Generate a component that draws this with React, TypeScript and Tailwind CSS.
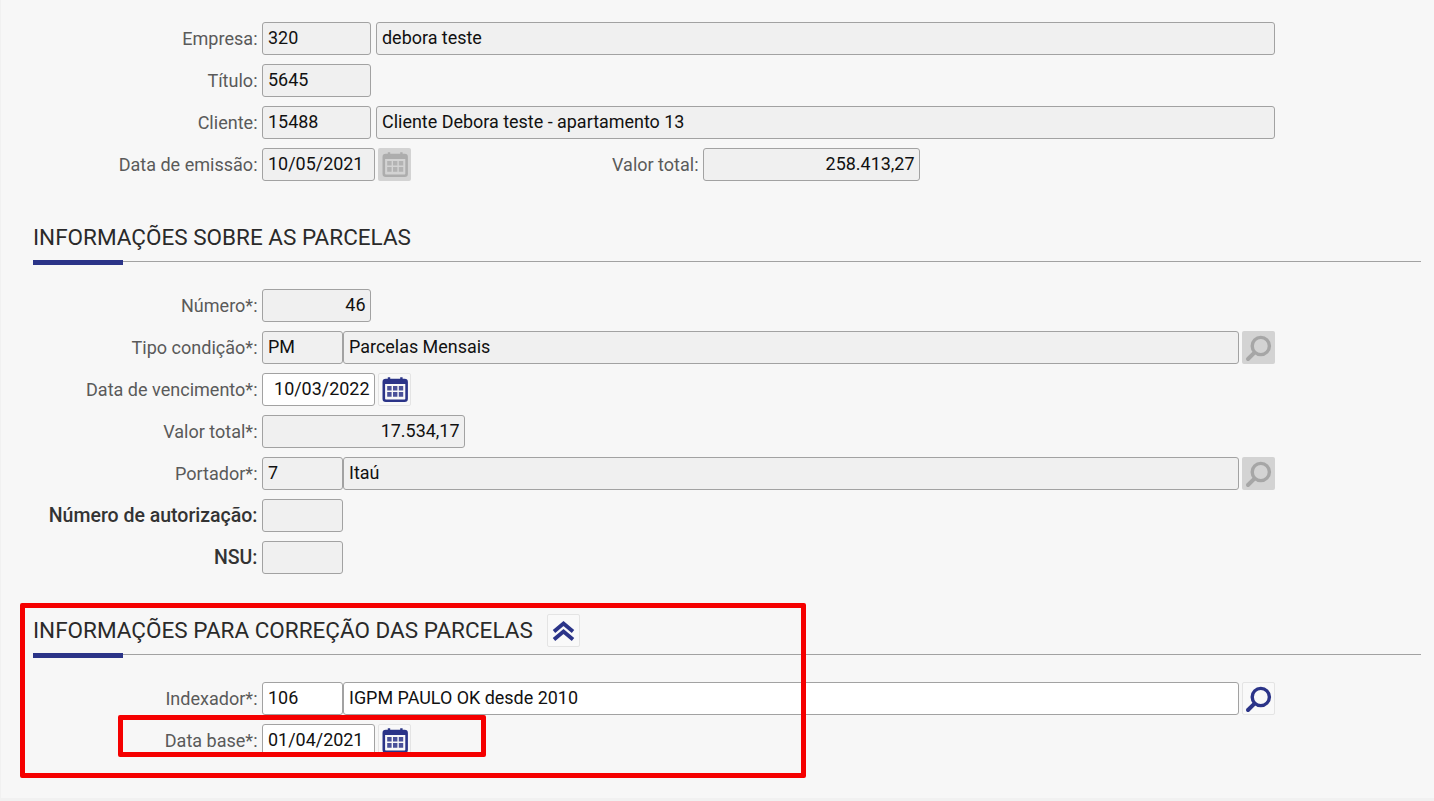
import type { ReactNode } from "react";

const navy = "#2b3488";

function CalendarIcon({ color }: { color: string }) {
  return (
    <svg width="33" height="33" viewBox="0 0 33 33" fill="none" className="shrink-0">
      <rect x="5.8" y="7" width="22.8" height="20.8" rx="2" stroke={color} strokeWidth="2.6" />
      <rect x="5.8" y="7" width="22.8" height="4" fill={color} />
      <path d="M11 4.2v4M23.4 4.2v4" stroke={color} strokeWidth="2.4" />
      <path
        d="M9.2 13h4.4v4.6H9.2zM15 13h4.4v4.6H15zM20.8 13h4.4v4.6h-4.4zM9.2 19h4.4v4.8H9.2zM15 19h4.4v4.8H15zM20.8 19h4.4v4.8h-4.4z"
        fill={color}
        opacity="0.85"
      />
    </svg>
  );
}

function SearchIcon({ color }: { color: string }) {
  return (
    <svg width="33" height="33" viewBox="0 0 33 33" fill="none" className="shrink-0">
      <circle cx="18.8" cy="15" r="8.6" stroke={color} strokeWidth="3.4" />
      <path d="M12.2 21.8L6 28" stroke={color} strokeWidth="4" strokeLinecap="round" />
    </svg>
  );
}

function IconButton({ children, disabled }: { children: ReactNode; disabled?: boolean }) {
  return (
    <span
      className={`flex h-[33px] w-[33px] shrink-0 items-center justify-center rounded-[2px] ${
        disabled ? "bg-[#d3d3d3]" : "border border-[#e4e4e4] bg-[#f9f9f9]"
      }`}
    >
      {children}
    </span>
  );
}

function Field({
  value,
  width,
  active,
  right,
}: {
  value?: string;
  width: string;
  active?: boolean;
  right?: boolean;
}) {
  return (
    <span
      className={`flex h-[33px] shrink-0 items-center rounded-[3px] border border-[#a2a2a2] px-[5px] pb-[1px] text-[17.95px] text-[#111] ${width} ${
        active ? "bg-white" : "bg-[#f0f0f0]"
      } ${right ? "justify-end pr-[4.5px]" : ""}`}
    >
      {value}
    </span>
  );
}

function Row({ label, bold, children }: { label: string; bold?: boolean; children?: ReactNode }) {
  return (
    <div className="flex h-[33px] items-center">
      <span
        className={`w-[257.5px] text-right ${
          bold ? "text-[19.5px] font-medium text-[#333]" : "text-[18.05px] text-[#5a5a5a]"
        }`}
      >
        {label}:
      </span>
      <div className="ml-[4.5px] flex items-center">{children}</div>
    </div>
  );
}

function SectionTitle({ title, children }: { title: string; children?: ReactNode }) {
  return (
    <div className="relative ml-[33px] mr-[13px] flex h-[40px] items-end border-b border-[#a2a2a2]">
      <div className="flex h-[33px] -translate-y-[7px] items-center gap-[14.5px]">
        <h2 className="text-[22.5px] font-normal text-[#2a2a2a]">{title}</h2>
        {children}
      </div>
      <span className="absolute -bottom-[4px] left-0 h-[5px] w-[90px] bg-[#2b3488]" />
    </div>
  );
}

export default function App() {
  return (
    <div className="relative h-[801px] w-[1434px] overflow-hidden bg-[#f7f7f7] pt-[22px] font-['Roboto',sans-serif]">
      <div className="flex flex-col gap-[9px]">
        <Row label="Empresa">
          <Field value="320" width="w-[109px]" />
          <span className="ml-[5px]">
            <Field value="debora teste" width="w-[899px]" />
          </span>
        </Row>
        <Row label="Título">
          <Field value="5645" width="w-[109px]" />
        </Row>
        <Row label="Cliente">
          <Field value="15488" width="w-[109px]" />
          <span className="ml-[5px]">
            <Field value="Cliente Debora teste - apartamento 13" width="w-[899px]" />
          </span>
        </Row>
        <div className="flex items-center">
          <Row label="Data de emissão">
            <Field value="10/05/2021" width="w-[113px]" />
            <span className="ml-[3px]">
              <IconButton disabled>
                <CalendarIcon color="#adadad" />
              </IconButton>
            </span>
          </Row>
          <span className="ml-[200px] w-[87.5px] whitespace-nowrap text-right text-[18px] text-[#5a5a5a]">
            Valor total:
          </span>
          <span className="ml-[4.5px]">
            <Field value="258.413,27" width="w-[217px]" right />
          </span>
        </div>
      </div>

      <div className="mt-[41px]">
        <SectionTitle title="INFORMAÇÕES SOBRE AS PARCELAS" />
      </div>

      <div className="mt-[27px] flex flex-col gap-[9px]">
        <Row label="Número*">
          <Field value="46" width="w-[109px]" right />
        </Row>
        <Row label="Tipo condição*">
          <Field value="PM" width="w-[81px]" />
          <Field value="Parcelas Mensais" width="w-[896px]" />
          <span className="ml-[3px]">
            <IconButton disabled>
              <SearchIcon color="#a6a6a6" />
            </IconButton>
          </span>
        </Row>
        <Row label="Data de vencimento*">
          <Field value="10/03/2022" width="w-[113px]" active right />
          <span className="ml-[3px]">
            <IconButton>
              <CalendarIcon color={navy} />
            </IconButton>
          </span>
        </Row>
        <Row label="Valor total*">
          <Field value="17.534,17" width="w-[203px]" right />
        </Row>
        <Row label="Portador*">
          <Field value="7" width="w-[81px]" />
          <Field value="Itaú" width="w-[896px]" />
          <span className="ml-[3px]">
            <IconButton disabled>
              <SearchIcon color="#a6a6a6" />
            </IconButton>
          </span>
        </Row>
        <Row label="Número de autorização" bold>
          <Field width="w-[81px]" />
        </Row>
        <Row label="NSU" bold>
          <Field width="w-[81px]" />
        </Row>
      </div>

      <div className="mt-[41px]">
        <SectionTitle title="INFORMAÇÕES PARA CORREÇÃO DAS PARCELAS">
          <IconButton>
            <svg width="33" height="33" viewBox="0 0 33 33" fill="none" className="shrink-0">
              <path d="M7 17.5L16.5 9.5L26 17.5M7 25.5L16.5 17.5L26 25.5" stroke={navy} strokeWidth="3.8" />
            </svg>
          </IconButton>
        </SectionTitle>
      </div>

      <div className="mt-[27px] flex flex-col gap-[9px]">
        <Row label="Indexador*">
          <Field value="106" width="w-[81px]" active />
          <Field value="IGPM PAULO OK desde 2010" width="w-[896px]" active />
          <span className="ml-[3px]">
            <IconButton>
              <SearchIcon color={navy} />
            </IconButton>
          </span>
        </Row>
        <Row label="Data base*">
          <Field value="01/04/2021" width="w-[113px]" active />
          <span className="ml-[3px]">
            <IconButton>
              <CalendarIcon color={navy} />
            </IconButton>
          </span>
        </Row>
      </div>

      {/* red annotations drawn over the form */}
      <div className="absolute left-[20px] top-[603px] h-[175px] w-[786px] rounded-[2px] border-[5px] border-[#f50000]" />
      <div className="absolute left-[118px] top-[715px] h-[42px] w-[368px] rounded-[2px] border-[5px] border-[#f50000]" />
      <div className="absolute bottom-0 left-0 h-[3px] w-full bg-[#f1f1f1]" />
      <div className="absolute bottom-0 left-0 top-0 w-px bg-[#f1f1f1]" />
    </div>
  );
}
